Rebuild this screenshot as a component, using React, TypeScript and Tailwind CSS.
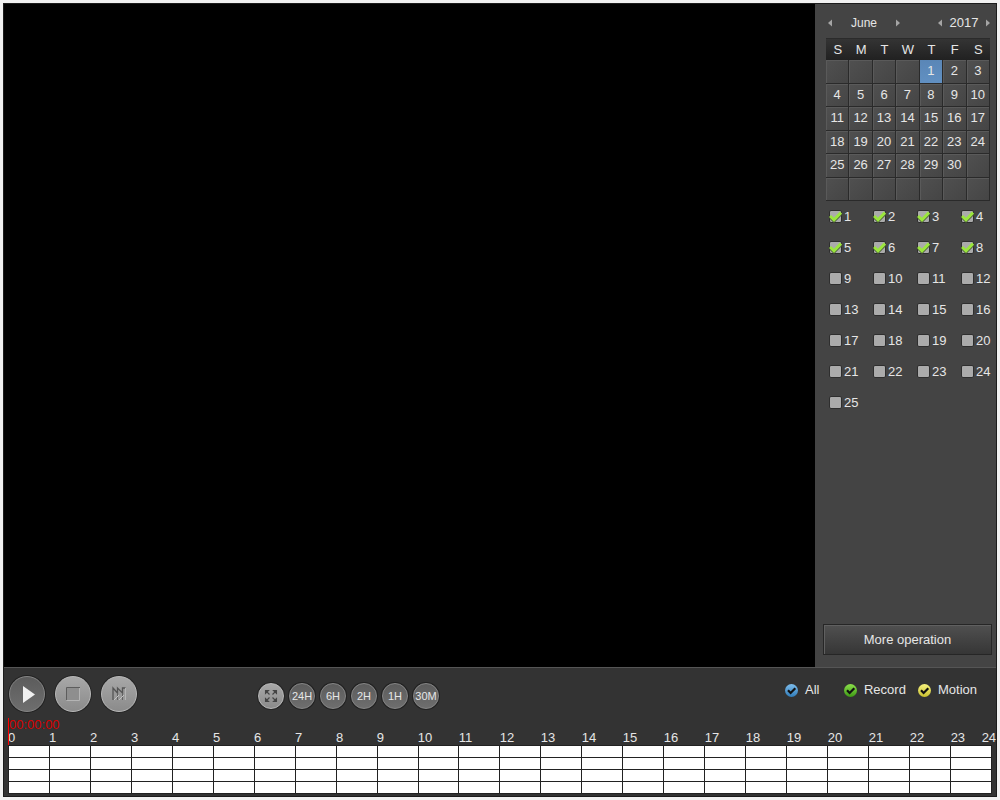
import { useState } from "react";

const WEEK_DAYS = ["S", "M", "T", "W", "T", "F", "S"];
const MONTHS = [
  "January", "February", "March", "April", "May", "June",
  "July", "August", "September", "October", "November", "December",
];
const CHANNELS = Array.from({ length: 25 }, (_, i) => i + 1);
const HOURS = Array.from({ length: 24 }, (_, i) => i);
const ZOOM_LEVELS = ["24H", "6H", "2H", "1H", "30M"];

const FILTERS = [
  { name: "All", width: "w-[59px]", color: "from-[#7dbdec] to-[#2f7cb8]" },
  { name: "Record", width: "w-[74px]", color: "from-[#8be04a] to-[#3d9a12]" },
  { name: "Motion", width: "", color: "from-[#f6f27c] to-[#c9c02c]" },
];

// six weeks, empty cells are null
const getWeeks = (year: number, month: number) => {
  const firstDay = new Date(year, month, 1).getDay();
  const total = new Date(year, month + 1, 0).getDate();
  return Array.from({ length: 6 }, (_, week) =>
    Array.from({ length: 7 }, (_, day) => {
      const date = week * 7 + day - firstDay + 1;
      return date > 0 && date <= total ? date : null;
    })
  );
};

type ArrowProps = { label: string; right?: boolean; onClick: () => void };

const Arrow = ({ label, right, onClick }: ArrowProps) => (
  <button aria-label={label} onClick={onClick} className="flex h-4 w-2 cursor-pointer items-center justify-center">
    <svg viewBox="0 0 4 8" className="h-2 w-1 fill-[#a5a5a5]">
      <path d={right ? "M0 0.5 L4 4 L0 7.5 Z" : "M4 0.5 L0 4 L4 7.5 Z"} />
    </svg>
  </button>
);

const Calendar = () => {
  const [month, setMonth] = useState(5);
  const [year, setYear] = useState(2017);
  const [selected, setSelected] = useState(1);

  return (
    <div>
      <div className="flex h-[34px] items-center pt-1 text-[13px]">
        <Arrow label="Previous month" onClick={() => setMonth((month + 11) % 12)} />
        <span className="w-[60px] text-center text-xs">{MONTHS[month]}</span>
        <Arrow label="Next month" right onClick={() => setMonth((month + 1) % 12)} />
        <div className="-mr-0.5 ml-auto flex items-center">
          <Arrow label="Previous year" onClick={() => setYear(year - 1)} />
          <span className="w-10 text-center">{year}</span>
          <Arrow label="Next year" right onClick={() => setYear(year + 1)} />
        </div>
      </div>
      <table className="h-[163px] w-full table-fixed border-separate border-spacing-0 border-t border-[#2b2b2b] text-[13px]">
        <thead>
          <tr className="bg-linear-to-b from-[#343434] to-[#212121]">
            {WEEK_DAYS.map((day, i) => (
              <th key={i} className="h-[21px] p-0 font-normal leading-5">{day}</th>
            ))}
          </tr>
        </thead>
        <tbody>
          {getWeeks(year, month).map((week, i) => (
            <tr key={i}>
              {week.map((date, j) => (
                <td
                  key={j}
                  className={`h-[23px] border-r border-b border-[#2a2a2a] p-0 text-center leading-5 ${
                    date && date === selected
                      ? "bg-linear-to-b from-[#5a86b6] to-[#6190c2]"
                      : "bg-linear-to-br from-[#505050] to-[#454545] shadow-[inset_1px_1px_0_#5a5a5a]"
                  }`}
                >
                  {date && (
                    <button onClick={() => setSelected(date)} className="block w-full cursor-pointer">
                      {date}
                    </button>
                  )}
                </td>
              ))}
            </tr>
          ))}
        </tbody>
      </table>
    </div>
  );
};

const ChannelList = () => {
  const [checked, setChecked] = useState([1, 2, 3, 4, 5, 6, 7, 8]);

  const toggle = (channel: number) => {
    setChecked(
      checked.includes(channel) ? checked.filter((c) => c !== channel) : [...checked, channel]
    );
  };

  return (
    <div className="grid grid-cols-[44px_44px_44px_auto] pl-[3px] text-[13px]">
      {CHANNELS.map((channel) => (
        <label key={channel} className="flex h-[31px] cursor-pointer items-center gap-0.5">
          <span className="relative flex">
            <input
              type="checkbox"
              checked={checked.includes(channel)}
              onChange={() => toggle(channel)}
              className="peer size-[13px] appearance-none rounded-xs border border-[#2e2e2e] bg-[#ababab]"
            />
            <svg viewBox="0 0 13 13" className="pointer-events-none absolute inset-0 hidden size-[13px] peer-checked:block">
              <path d="M1.5 7.5 L5 11 L12 4" fill="none" stroke="#4a5a38" strokeWidth="3" />
              <path d="M1 6 L5 9.8 L12 2.6" fill="none" stroke="#9be63e" strokeWidth="3" />
            </svg>
          </span>
          {channel}
        </label>
      ))}
    </div>
  );
};

const lightRound =
  "flex cursor-pointer items-center justify-center rounded-full border border-[#b9b9b9] bg-linear-to-b from-[#a8a8a8] to-[#8b8b8b] shadow-[0_0_0_1px_#262626]";
const darkRound =
  "flex cursor-pointer items-center justify-center rounded-full border border-[#858585] bg-linear-to-b from-[#5c5c5c] to-[#6e6e6e] shadow-[0_0_0_1px_#222]";

const Controls = () => {
  const [playing, setPlaying] = useState(false);

  return (
    <div className="flex items-center gap-2.5">
      <button aria-label="Play" aria-pressed={playing} onClick={() => setPlaying(!playing)} className={`${darkRound} size-9`}>
        <svg viewBox="0 0 36 36" className="size-9 shrink-0">
          <path d="M14 10 L26 18.5 L14 27 Z" fill="#f0f0f0" />
        </svg>
      </button>
      <button aria-label="Stop" onClick={() => setPlaying(false)} className={`${lightRound} size-9`}>
        <svg viewBox="0 0 36 36" className="size-9 shrink-0" fill="none">
          <path d="M11.5 24.5 H24.5 V12" stroke="#b4b4b4" />
          <rect x="12" y="12" width="12" height="12" fill="#8e8e8e" />
          <path d="M11.5 24 V11.5 H25" stroke="#5d5d5d" />
        </svg>
      </button>
      <button aria-label="Next frame" className={`${lightRound} size-9`}>
        <svg viewBox="0 0 36 36" className="size-9 shrink-0" fill="none">
          <path d="M11.5 12 L16 17 V12 L20.5 17 V12 H24 V24 H21.5 V19 L16 24.5 V19.5 L11.5 24.5 Z" fill="#999" />
          <path d="M12 24 V12 L16.5 17 V12 L21.5 17 V12 H24.5" stroke="#555" strokeWidth="1.3" />
          <path d="M16.5 17 V24 M21.5 17 V24" stroke="#626262" />
          <path d="M13 24 L18 19 M18 24 L23 19" stroke="#c2c2c2" />
          <path d="M24.5 12 V24" stroke="#b5b5b5" />
        </svg>
      </button>
    </div>
  );
};

const ZoomButtons = () => (
  <div className="flex items-center gap-[5px] pt-1">
    <button aria-label="Full screen" className={`${lightRound} size-[26px]`}>
      <svg viewBox="0 0 26 26" className="size-[26px] shrink-0">
        <g fill="#444" stroke="#444" strokeWidth="1.1">
          <path d="M7.5 7.5 H10.5 L7.5 10.5 Z M9 9 L11.5 11.5" />
          <path d="M18.5 7.5 H15.5 L18.5 10.5 Z M17 9 L14.5 11.5" />
          <path d="M7.5 18.5 H10.5 L7.5 15.5 Z M9 17 L11.5 14.5" />
          <path d="M18.5 18.5 H15.5 L18.5 15.5 Z M17 17 L14.5 14.5" />
        </g>
      </svg>
    </button>
    {ZOOM_LEVELS.map((level) => (
      <button key={level} className={`${darkRound} size-[26px] text-[11px]`}>
        {level}
      </button>
    ))}
  </div>
);

const RecordFilters = () => (
  <div className="mb-2 ml-auto flex pr-[19px] text-[13px]">
    {FILTERS.map(({ name, width, color }) => (
      <label key={name} className={`flex cursor-pointer items-center gap-[7px] ${width}`}>
        <span className="relative flex">
          <input
            type="checkbox"
            defaultChecked
            className={`peer size-[13px] appearance-none rounded-full bg-linear-to-b ${color}`}
          />
          <svg viewBox="0 0 13 13" className="pointer-events-none absolute inset-0 hidden size-[13px] peer-checked:block">
            <path d="M3 6.3 L5.6 9 L10.3 4.2" fill="none" stroke="#111" strokeWidth="2.2" />
          </svg>
        </span>
        {name}
      </label>
    ))}
  </div>
);

const Timeline = () => (
  <div className="relative px-1">
    <div className="flex pt-[13px] text-[13px] leading-[14px]">
      {HOURS.map((hour) => (
        <span key={hour} className="w-0 flex-1">{hour}</span>
      ))}
      {/* last hour sits past the end of the grid */}
      <span className="-mr-1 -ml-2.5">24</span>
    </div>
    <div className="border-t border-l border-[#222]">
      {[0, 1, 2, 3].map((row) => (
        <div key={row} className="flex h-3 bg-white">
          {HOURS.map((hour) => (
            <span key={hour} className="flex-1 border-r border-b border-[#222]" />
          ))}
        </div>
      ))}
    </div>
    {/* playback cursor */}
    <div className="absolute top-0 left-1 h-[27px] border-l border-[#ff0000] text-[13px] leading-[13px] text-[#d80000]">
      00:00:00
    </div>
  </div>
);

export default function App() {
  return (
    <div className="flex min-h-screen bg-[#f1f1f1] p-[3px] font-['Liberation_Sans',Arial,sans-serif] text-[#e6e6e6]">
      <div className="flex flex-1 flex-col border border-[#1c1c1c] bg-[#333]">
        <div className="flex flex-1">
          <main className="flex-1 bg-black" />
          <aside className="flex w-[181px] flex-col bg-[#444] pr-1.5 pb-3 pl-[11px]">
            <Calendar />
            <ChannelList />
            <button className="mt-auto -mr-0.5 -ml-[3px] h-[31px] cursor-pointer border border-[#262626] bg-linear-to-b from-[#505050] to-[#363636] text-[13px] shadow-[inset_1px_1px_0_#606060]">
              More operation
            </button>
          </aside>
        </div>
        <footer className="border-t border-[#555] pb-0.5">
          <div className="flex h-[50px] items-center pt-0.5 pl-[5px]">
            <Controls />
            <div className="ml-[121px]">
              <ZoomButtons />
            </div>
            <RecordFilters />
          </div>
          <Timeline />
        </footer>
      </div>
    </div>
  );
}
